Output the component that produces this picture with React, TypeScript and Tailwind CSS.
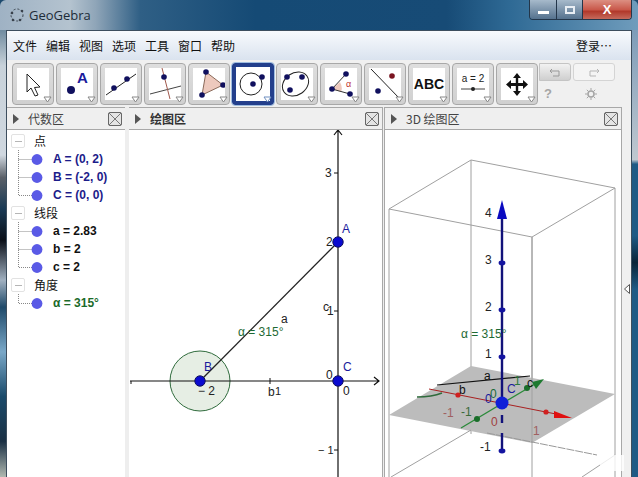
import React from "react";

const D = "#10105e";
const font = { fontFamily: '"Liberation Sans", Arial, sans-serif' };

function Dot({ x, y, r = 2.8, c = D }: { x: number; y: number; r?: number; c?: string }) {
  return <circle cx={x} cy={y} r={r} fill={c} />;
}

const icons: React.ReactNode[] = [
  <path d="M10 6 L10 24 L14 20 L18 28 L21 27 L17.5 19.5 L23 19 Z" fill="#fff" stroke="#222" strokeWidth="1" />,
  <>
    <Dot x={10} y={22} r={4} />
    <text x={16} y={15} fontSize="15" fontWeight="700" fill="#1a1a9c" style={font}>A</text>
  </>,
  <>
    <line x1="1" y1="27" x2="31" y2="6" stroke="#222" strokeWidth="1" />
    <Dot x={9} y={20} />
    <Dot x={22} y={11} />
  </>,
  <>
    <line x1="1" y1="26" x2="32" y2="18" stroke="#444" strokeWidth="1" />
    <line x1="13" y1="0" x2="21" y2="31" stroke="#a0584c" strokeWidth="1" />
    <Dot x={15} y={9} />
  </>,
  <>
    <path d="M13 4 L30 17 L9 27 Z" fill="#edc9bd" stroke="#8a6a5a" strokeWidth="1" />
    <Dot x={13} y={4} />
    <Dot x={30} y={17} />
    <Dot x={9} y={27} />
  </>,
  <>
    <circle cx="14" cy="16" r="11" fill="#fff" stroke="#222" strokeWidth="1" />
    <Dot x={16} y={16} />
    <Dot x={25} y={9} />
  </>,
  <>
    <ellipse cx="14.5" cy="16" rx="14" ry="11" transform="rotate(-35 14.5 16)" fill="#fff" stroke="#222" strokeWidth="1" />
    <Dot x={6} y={9} />
    <Dot x={21} y={9} />
    <Dot x={9} y={22} />
  </>,
];

const icons2: React.ReactNode[] = [
  <>
    <path d="M7 21 L15 14 Q18 20 16 24 Z" fill="#edc9bd" />
    <path d="M7 21 L21 6 M7 21 L25 26" stroke="#333" strokeWidth="1" fill="none" />
    <text x={21} y={19} fontSize="9" fill="#c03030" style={font}>α</text>
    <Dot x={7} y={21} />
    <Dot x={21} y={6} />
    <Dot x={25} y={26} />
  </>,
  <>
    <line x1="2" y1="1" x2="31" y2="31" stroke="#222" strokeWidth="1" />
    <Dot x={23} y={8} c="#7a1420" />
    <Dot x={9} y={23} />
  </>,
  <text x={16} y={21} textAnchor="middle" fontSize="14" fontWeight="700" fill="#111" style={font}>ABC</text>,
  <>
    <text x={16} y={14} textAnchor="middle" fontSize="10" fill="#222" style={font}>a = 2</text>
    <line x1="4" y1="21" x2="28" y2="21" stroke="#444" strokeWidth="1" />
    <Dot x={16} y={21} r={2} c="#222" />
  </>,
  <path d="M16 5 L20 10 L17.2 10 L17.2 15 L22 15 L22 12 L27 16.5 L22 21 L22 18 L17.2 18 L17.2 23 L20 23 L16 28 L12 23 L14.8 23 L14.8 18 L10 18 L10 21 L5 16.5 L10 12 L10 15 L14.8 15 L14.8 10 L12 10 Z" fill="#111" />,
];

function ToolButton({ icon, selected }: { icon: React.ReactNode; selected?: boolean }) {
  return (
    <div
      className={
        selected
          ? "relative flex h-[42px] w-[42px] items-center justify-center rounded-[3px] border-[4px] border-[#233f8c] bg-white outline outline-1 outline-[#9fbde0]"
          : "relative flex h-[42px] w-[42px] items-center justify-center rounded-[4px] border border-[#a8a8a8] bg-gradient-to-b from-[#dedede] to-[#d0d0d0]"
      }
    >
      <div className="h-[32px] w-[32px] shrink-0 bg-white">
        <svg width="32" height="32" viewBox="0 0 32 32">{icon}</svg>
      </div>
      <svg className={selected ? "absolute bottom-[-2px] right-[-2px]" : "absolute bottom-[1px] right-[1px]"} width="9" height="7" viewBox="0 0 9 7">
        <path d="M1 1 H8 L4.5 6 Z" fill="#fff" stroke={selected ? "#6f8fc0" : "#888"} strokeWidth="1" />
      </svg>
    </div>
  );
}

function PanelHeader({ title, bold }: { title: string; bold?: boolean }) {
  return (
    <div className="flex h-[23px] shrink-0 items-center border-b border-t border-[#a8a8a8] bg-[#efefef] pl-[6px] pr-[3px]">
      <svg width="6" height="10" viewBox="0 0 6 10"><path d="M0 0 L6 5 L0 10 Z" fill="#555" /></svg>
      <span className={bold ? "ml-[9px] flex-1 text-[12px] font-bold text-[#333]" : "ml-[9px] flex-1 text-[12px] text-[#444]"}>{title}</span>
      <svg width="14" height="14" viewBox="0 0 14 14">
        <rect x="0.5" y="0.5" width="13" height="13" rx="1.5" fill="#e4e4e4" stroke="#666" />
        <path d="M1 1 L13 13 M13 1 L1 13" stroke="#777" strokeWidth="1" />
      </svg>
    </div>
  );
}

type Row = { head?: string; text?: string; color?: string; last?: boolean };
const rows: Row[] = [
  { head: "点" },
  { text: "A = (0, 2)", color: "text-[#1c1c8a]" },
  { text: "B = (-2, 0)", color: "text-[#1c1c8a]" },
  { text: "C = (0, 0)", color: "text-[#1c1c8a]", last: true },
  { head: "线段" },
  { text: "a = 2.83", color: "text-[#111]" },
  { text: "b = 2", color: "text-[#111]" },
  { text: "c = 2", color: "text-[#111]", last: true },
  { head: "角度" },
  { text: "α = 315°", color: "text-[#1b6a2a]", last: true },
];

function TreeRow({ r }: { r: Row }) {
  if (r.head) {
    return (
      <div className="flex h-[18px] items-center pl-[4px]">
        <div className="flex h-[14px] w-[14px] items-center justify-center rounded-[2px] border border-[#e2e2e2]">
          <div className="h-[1px] w-[7px] bg-[#b5b5b5]" />
        </div>
        <span className="ml-[9px] text-[12px] text-[#111]">{r.head}</span>
      </div>
    );
  }
  return (
    <div className="flex h-[18px] items-center pl-[11px]">
      <svg width="26" height="18" viewBox="0 0 26 18" className="shrink-0">
        <path d={r.last ? "M0.5 0 V9.5 H14" : "M0.5 0 V18 M0.5 9.5 H14"} stroke="#888" strokeDasharray="1 1" fill="none" />
        <circle cx="19" cy="9.5" r="5.4" fill="#5a5ae6" />
      </svg>
      <span className={`ml-[9px] whitespace-nowrap text-[12px] font-bold ${r.color}`} style={font}>{r.text}</span>
    </div>
  );
}

function Graphics2D() {
  const t = (x: number, y: number, s: string, fill = "#222", size = 12) => (
    <text x={x} y={y} fontSize={size} fill={fill} style={font}>{s}</text>
  );
  return (
    <svg width="253" height="347" viewBox="129 130 253 347" className="block">
      <circle cx="200" cy="381" r="30" fill="#e6eee4" stroke="#2f6b3c" strokeWidth="1" />
      <path d="M130 381 H379 M374 377 L379 381 L374 385" stroke="#111" strokeWidth="1.2" fill="none" />
      <path d="M338 477 V130 M334 135 L338 130 L342 135" stroke="#111" strokeWidth="1.2" fill="none" />
      <path d="M131 381 v3 M270 378 v6 M334 173 h4 M334 311 h4 M334 450 h4" stroke="#111" />
      <line x1="200" y1="381" x2="338" y2="242" stroke="#222" strokeWidth="1.3" />
      {t(325, 177, "3")}
      {t(326, 246, "2")}
      {t(327, 315, "1")}
      {t(323, 311, "c")}
      {t(326, 379, "0")}
      {t(343, 395, "0")}
      {t(198, 395, "− 2")}
      {t(268, 396, "b")}
      {t(275, 395, "1", "#222", 11)}
      {t(318, 454, "− 1", "#222", 11)}
      {t(281, 323, "a")}
      {t(238, 336, "α = 315°", "#1e6a34")}
      {t(342, 233, "A", "#1a1a9c")}
      {t(204, 371, "B", "#1a1a9c")}
      {t(343, 371, "C", "#1a1a9c")}
      <circle cx="338" cy="242" r="5.2" fill="#0a0ad0" stroke="#10105e" />
      <circle cx="200" cy="381" r="5.2" fill="#0a0ad0" stroke="#10105e" />
      <circle cx="338" cy="381" r="5.2" fill="#0a0ad0" stroke="#10105e" />
    </svg>
  );
}

function Graphics3D() {
  const t = (x: number, y: number, s: string, fill = "#222", size = 12) => (
    <text x={x} y={y} fontSize={size} fill={fill} style={font}>{s}</text>
  );
  return (
    <svg width="236" height="347" viewBox="385 130 236 347" className="block">
      <g stroke="#a0a0a0" fill="none" strokeWidth="1">
        <path d="M389 209 L471 160 L615 188 L532 237 Z" />
        <path d="M389 209 V477 M471 160 V434 M532 237 V477 M615 188 V477" />
      </g>
      <path d="M471 366 L615 394 L532 443 L389 415 Z" fill="#bcbcbc" />
      <path d="M532 237 V443" stroke="#a0a0a0" fill="none" />
      <path d="M391 477 L471 430" stroke="#a0a0a0" fill="none" />
      <path d="M487 433 L597 455" stroke="#999" strokeDasharray="8 1" fill="none" />
      <path d="M582 477 L615 455" stroke="#a0a0a0" fill="none" />
      <path d="M437 385 L530 376" stroke="#111" strokeWidth="1.2" />
      <path d="M417 397 Q432 397 442 393" stroke="#2f6b3c" strokeWidth="1.5" fill="none" />
      <path d="M429 389 L556 414" stroke="#a82020" strokeWidth="1" />
      <path d="M554 411 L572 418 L554 418 Z" fill="#e01010" />
      <circle cx="458" cy="395" r="2.6" fill="#d02020" />
      <circle cx="546" cy="412" r="2.6" fill="#d02020" />
      <path d="M461 428 L535 384" stroke="#2b8a3a" strokeWidth="1.3" />
      <path d="M532 382 L544 379 L536 389 Z" fill="#1e7a30" />
      <circle cx="477" cy="419" r="3" fill="#1a6e2a" />
      <circle cx="527" cy="388" r="3" fill="#1a6e2a" />
      <path d="M502 219 V403 M502 415 V423 M502 433 V452" stroke="#12127a" strokeWidth="2.4" />
      <path d="M502 200 L507 219 L497 219 Z" fill="#0a0ac0" />
      {[263, 310, 357, 451].map((y) => (
        <ellipse key={y} cx="502" cy={y} rx="3.4" ry="2.4" fill="#1414a0" />
      ))}
      {t(485, 217, "4")}
      {t(485, 264, "3")}
      {t(485, 311, "2")}
      {t(485, 358, "1")}
      {t(480, 451, "-1")}
      {t(461, 338, "α = 315°", "#1e6a34")}
      {t(484, 380, "a", "#111")}
      {t(459, 394, "b", "#111")}
      {t(514, 385, "1", "#2b7a3a")}
      {t(527, 387, "c", "#111")}
      {t(490, 398, "0", "#1a6a3a")}
      {t(485, 403, "0", "#1a1a9c")}
      {t(507, 393, "C", "#1a1a9c")}
      {t(443, 417, "-1", "#a06060")}
      {t(461, 416, "-1", "#3a6a3a")}
      {t(491, 426, "0", "#a04040")}
      {t(533, 435, "1", "#a06060")}
      <circle cx="502" cy="403" r="6.5" fill="#0f1fd8" />
    </svg>
  );
}

export default function App() {
  return (
    <div
      className="relative flex h-[477px] w-[638px] flex-col overflow-hidden bg-[#1d4a6e] text-[#222]"
      style={{ fontFamily: '"Noto Sans CJK SC", "Liberation Sans", sans-serif' }}
    >
      <div className="flex h-[30px] shrink-0 items-start rounded-t-[6px] bg-[linear-gradient(90deg,#9fb2c4_0%,#b4c3cf_11%,#8fa5b8_15%,#2f5f85_22%,#154a75_40%,#174b76_70%,#2f6a95_80%,#6f9cbc_100%)]">
        <svg className="ml-[9px] mt-[7px]" width="16" height="16" viewBox="0 0 16 16">
          <circle cx="8" cy="8" r="6" fill="none" stroke="#39424c" strokeDasharray="2 2" />
          <circle cx="3" cy="6" r="1.3" fill="#39424c" />
          <circle cx="13" cy="4" r="1.3" fill="#39424c" />
          <circle cx="4" cy="13" r="1.3" fill="#39424c" />
          <circle cx="11" cy="13" r="1.3" fill="#39424c" />
        </svg>
        <span className="ml-[4px] mt-[5px] text-[13px] leading-[20px] text-[#1d2c39]" style={{ fontFamily: '"Open Sans", sans-serif' }}>GeoGebra</span>
        <div className="ml-auto mr-[6px] flex h-[20px] overflow-hidden rounded-b-[4px] border-x border-b border-[#23364a]">
          <div className="flex w-[27px] items-center justify-center border-r border-[#23364a] bg-gradient-to-b from-[#a7bacb] to-[#55728e]">
            <div className="mt-[5px] h-[3px] w-[11px] bg-white" />
          </div>
          <div className="flex w-[26px] items-center justify-center border-r border-[#23364a] bg-gradient-to-b from-[#a7bacb] to-[#55728e]">
            <div className="h-[8px] w-[10px] border-2 border-[#e8eef4]" />
          </div>
          <div className="flex w-[48px] items-center justify-center bg-[linear-gradient(180deg,#dc8f82_0%,#c9594b_50%,#b2392b_60%,#c56a5c_100%)]">
            <span className="text-[13px] font-bold leading-none text-white" style={font}>X</span>
          </div>
        </div>
      </div>

      <div className="flex min-h-0 flex-1">
        <div className="w-[6px] shrink-0 bg-[linear-gradient(180deg,#6f8ba0_0%,#c8d2da_8%,#d0d8e0_28%,#5a6068_33%,#1a3a55_40%,#0a0f18_47%,#a0b0c0_56%,#1f4a6a_62%,#7aa8c8_72%,#1a4a6a_82%,#1a3044_92%,#b0b8b0_100%)]" />
        <div className="flex w-[626px] shrink-0 flex-col border-x border-t border-[#3d4e5e] bg-[#f0f0f0]">
          <div className="flex h-[29px] shrink-0 items-center gap-[9px] bg-gradient-to-b from-[#f8fafd] to-[#dae3ef] pl-[6px] pr-[19px] text-[12px] text-[#111]">
            {["文件", "编辑", "视图", "选项", "工具", "窗口", "帮助"].map((m) => (
              <span key={m}>{m}</span>
            ))}
            <span className="ml-auto">登录…</span>
          </div>

          <div className="flex h-[47px] shrink-0 items-start bg-[#f0f0f0] pl-[5px] pt-[3px]">
            <div className="flex gap-[2px]">
              {icons.map((ic, i) => (
                <ToolButton key={i} icon={ic} selected={i === 5} />
              ))}
              {icons2.map((ic, i) => (
                <ToolButton key={i} icon={ic} />
              ))}
            </div>
            <div className="ml-[1px] flex w-[77px] flex-col items-center">
              <div className="flex gap-[2px] self-start">
                <div className="flex h-[18px] w-[32px] items-center justify-center rounded-r-[3px] border border-[#c4c4c4] bg-gradient-to-b from-[#f2f2f2] to-[#cfcfcf]">
                  <svg width="12" height="9" viewBox="0 0 12 9"><path d="M3 1 L1 3 L3 5 M1 3 H10 V8 H4" stroke="#999" fill="none" /></svg>
                </div>
                <div className="flex h-[18px] w-[42px] items-center justify-center rounded-[3px] border border-[#d4d4d4] bg-[#f4f4f4]">
                  <svg width="12" height="9" viewBox="0 0 12 9"><path d="M9 1 L11 3 L9 5 M11 3 H2 V8 H8" stroke="#b5b5b5" fill="none" /></svg>
                </div>
              </div>
              <div className="mt-[3px] flex w-full items-center gap-[33px] pl-[5px]">
                <span className="text-[13px] font-bold text-[#a5a5a5]" style={font}>?</span>
                <svg width="12" height="12" viewBox="0 0 12 12">
                  <circle cx="6" cy="6" r="3" fill="none" stroke="#a5a5a5" strokeWidth="1.5" />
                  <path d="M6 0 V2.5 M6 9.5 V12 M0 6 H2.5 M9.5 6 H12 M1.8 1.8 L3.5 3.5 M8.5 8.5 L10.2 10.2 M10.2 1.8 L8.5 3.5 M3.5 8.5 L1.8 10.2" stroke="#a5a5a5" />
                </svg>
              </div>
            </div>
          </div>

          <div className="flex min-h-0 flex-1">
            <div className="flex w-[118px] shrink-0 flex-col">
              <PanelHeader title="代数区" />
              <div className="flex-1 bg-white pt-[2px]">
                {rows.map((r, i) => (
                  <TreeRow key={i} r={r} />
                ))}
              </div>
            </div>
            <div className="w-[4px] shrink-0 bg-[#eeeeee]" />
            <div className="flex w-[253px] shrink-0 flex-col">
              <PanelHeader title="绘图区" bold />
              <div className="flex-1 bg-white"><Graphics2D /></div>
            </div>
            <div className="w-[3px] shrink-0 border-x border-[#a8a8a8] bg-[#eeeeee]" />
            <div className="flex w-[236px] shrink-0 flex-col">
              <PanelHeader title="3D 绘图区" />
              <div className="flex-1 bg-white"><Graphics3D /></div>
            </div>
            <div className="flex w-[10px] shrink-0 flex-col items-center border-l border-[#a8a8a8] bg-[#f0f0f0] pt-[177px]">
              <svg width="6" height="10" viewBox="0 0 6 10"><path d="M5.5 0.5 L0.5 5 L5.5 9.5 Z" fill="#fff" stroke="#555" /></svg>
            </div>
          </div>
        </div>
        <div className="w-[6px] shrink-0 bg-[linear-gradient(180deg,#7d9cb8_0%,#c0c8d0_29%,#1f5a85_30%,#1f5a85_46%,#0a2438_52%,#1f5a85_58%,#1f5a85_100%)]" />
      </div>
      <div className="absolute bottom-[6px] right-[14px] h-[16px] w-[24px] bg-white opacity-80" />
    </div>
  );
}
